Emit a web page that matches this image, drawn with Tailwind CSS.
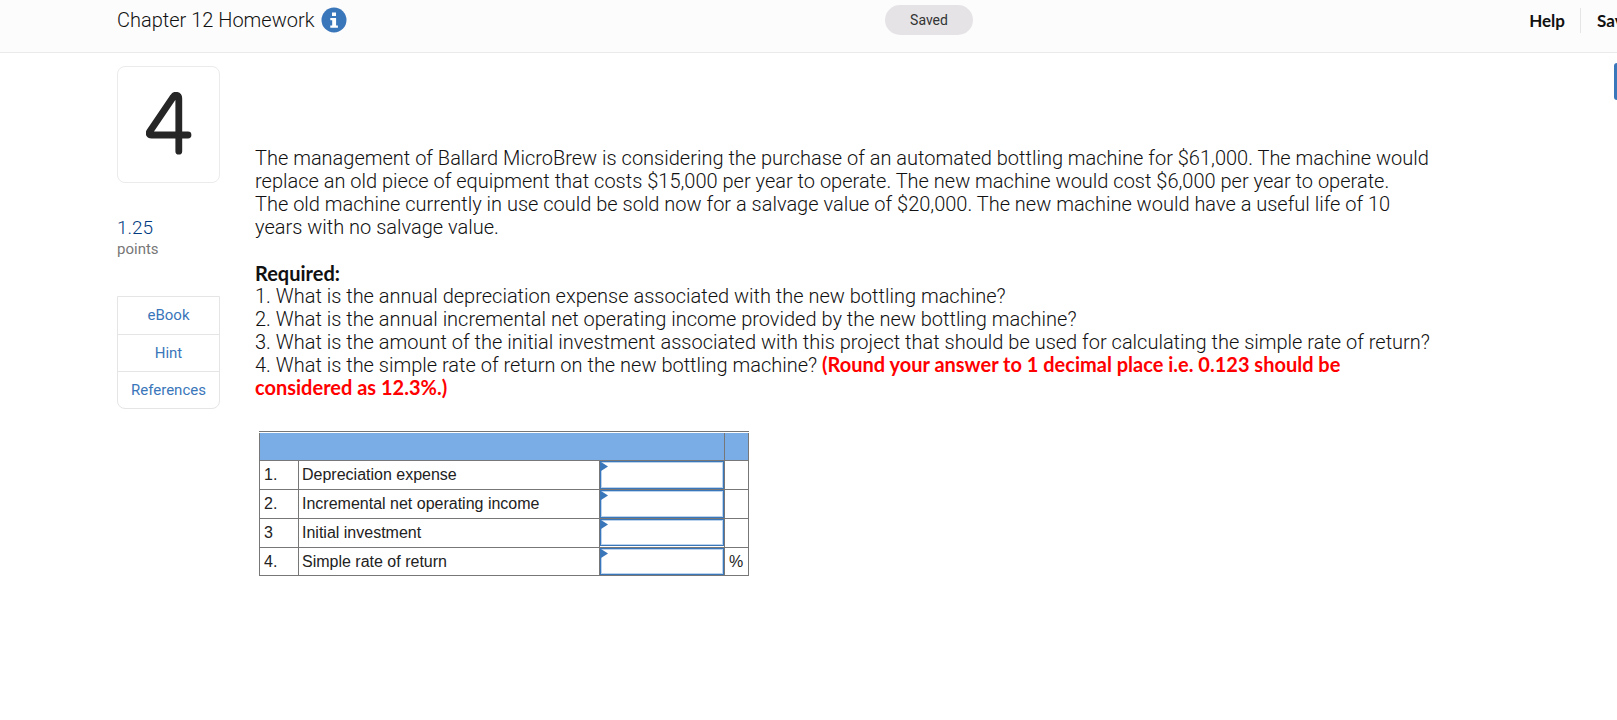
<!DOCTYPE html>
<html lang="en">
<head>
<meta charset="utf-8">
<title>Chapter 12 Homework</title>
<script src="https://cdn.jsdelivr.net/npm/@tailwindcss/browser@4"></script>
</head>
<body class="overflow-x-hidden bg-white font-['Roboto',sans-serif] font-light text-[#111]">
<header class="flex h-[53px] items-start overflow-hidden border-b border-[#eaeaea] bg-[#fcfcfc] pl-[117px]">
  <div class="flex w-[768px] items-center gap-[6px] pt-[7px]">
    <h1 class="text-[20px] leading-[26px]">Chapter 12 Homework</h1>
    <button type="button" aria-label="Assignment information">
      <svg class="size-[26px]" viewBox="0 0 26 26"><circle cx="13" cy="13" r="12.5" fill="#3a76ba"/><path d="M11 5.500h4v3.600h-4zM9.300 11h5.800v7.500h1.800v2.200H9.300v-2.200h1.900v-5.300H9.300z" fill="#fff"/></svg>
    </button>
  </div>
  <div class="mt-[5px] w-[88px] shrink-0 rounded-full bg-[#e5e3e6] text-center text-[14px] leading-[30px] font-normal text-[#333]">Saved</div>
  <nav class="ml-auto flex pt-[8px] font-['Lato',sans-serif] text-[17px] leading-[25px] font-bold">
    <a href="#" class="border-r border-[#e5e5e5] pr-[15px]">Help</a>
    <a href="#" class="w-[36px] overflow-hidden pl-[16px] whitespace-nowrap">Save &amp; Exit</a>
  </nav>
</header>
<div class="relative flex pl-[117px]">
  <aside class="w-[103px] shrink-0 pt-[13px]">
    <div class="flex h-[117px] items-center justify-center rounded-lg border border-[#ebebeb] pb-[3px]">
      <svg class="h-[63px] w-[46px]" viewBox="0 0 46 63" role="img" aria-label="Question 4"><path d="M32.800 59.200V6.500C32.800 2.800 29 2.200 27.200 5L3.800 39.500C2.500 41.500 3.200 43 5.500 43H42" fill="none" stroke="#262626" stroke-width="6.800" stroke-linecap="round" stroke-linejoin="round"/></svg>
    </div>
    <p class="mt-[34px] text-[19px] leading-[22px] text-[#003a80]">1.25</p>
    <p class="text-[15px] leading-[20px] font-normal text-[#777]">points</p>
    <div class="mt-[37px] flex flex-col divide-y divide-[#e5e5e5] rounded-b-lg border border-[#e5e5e5] text-[15px] leading-[36px] font-normal text-[#3a76ba]">
      <button type="button" class="pb-px">eBook</button>
      <button type="button">Hint</button>
      <button type="button">References</button>
    </div>
  </aside>
  <main class="min-w-0 flex-1 pt-[94px] pl-[35px]">
    <div class="text-[20px] leading-[23px]">
      <p>The management of Ballard MicroBrew is considering the purchase of an automated bottling machine for $61,000. The machine would<br>replace an old piece of equipment that costs $15,000 per year to operate. The new machine would cost $6,000 per year to operate.<br>The old machine currently in use could be sold now for a salvage value of $20,000. The new machine would have a useful life of 10<br>years with no salvage value.</p>
      <p class="mt-[23px] font-['Lato',sans-serif] font-bold">Required:</p>
      <p>1. What is the annual depreciation expense associated with the new bottling machine?</p>
      <p>2. What is the annual incremental net operating income provided by the new bottling machine?</p>
      <p>3. What is the amount of the initial investment associated with this project that should be used for calculating the simple rate of return?</p>
      <p>4. What is the simple rate of return on the new bottling machine? <strong class="font-['Lato',sans-serif] leading-5 font-bold text-[#f00]">(Round your answer to 1 decimal place i.e. 0.123 should be<br>considered as 12.3%.)</strong></p>
    </div>
    <div class="mt-[31px] ml-[4px] w-[490px] border-t border-[#777] pt-px font-['Liberation_Sans',Arial,sans-serif] text-[16px] leading-[20px] font-normal text-[#222]">
      <table class="w-full table-fixed border-collapse">
        <colgroup><col class="w-[39px]"><col class="w-[301px]"><col class="w-[125px]"><col class="w-[24px]"></colgroup>
        <thead>
          <tr class="h-[27px] bg-[#7aace6]"><th colspan="3" class="border border-t-0 border-[#777]"></th><th class="border border-t-0 border-[#777]"></th></tr>
        </thead>
        <tbody>
          <tr class="h-[29px]">
            <td class="border border-[#777] p-0 pt-px pl-[4px]">1.</td>
            <td class="border border-[#777] p-0 pt-px pl-[3px]"><label for="a1">Depreciation expense</label></td>
            <td class="border border-[#777] p-0"><div class="relative"><input id="a1" type="text" class="block h-[28px] w-full border border-[#3a76ba] px-3 shadow-[inset_0_0_0_1px_#bcd3ee] outline-none"><svg class="pointer-events-none absolute top-px left-px h-[9px] w-[7px]" viewBox="0 0 7 9"><path d="M0 0L7 4.500L0 9z" fill="#3a76ba"/></svg></div></td>
            <td class="border border-[#777]"></td>
          </tr>
          <tr class="h-[29px]">
            <td class="border border-[#777] p-0 pl-[4px]">2.</td>
            <td class="border border-[#777] p-0 pl-[3px]"><label for="a2">Incremental net operating income</label></td>
            <td class="border border-[#777] p-0"><div class="relative"><input id="a2" type="text" class="block h-[28px] w-full border border-[#3a76ba] px-3 shadow-[inset_0_0_0_1px_#bcd3ee] outline-none"><svg class="pointer-events-none absolute top-px left-px h-[9px] w-[7px]" viewBox="0 0 7 9"><path d="M0 0L7 4.500L0 9z" fill="#3a76ba"/></svg></div></td>
            <td class="border border-[#777]"></td>
          </tr>
          <tr class="h-[29px]">
            <td class="border border-[#777] p-0 pl-[4px]">3</td>
            <td class="border border-[#777] p-0 pl-[3px]"><label for="a3">Initial investment</label></td>
            <td class="border border-[#777] p-0 pb-px"><div class="relative"><input id="a3" type="text" class="block h-[27px] w-full border border-[#3a76ba] px-3 shadow-[inset_0_0_0_1px_#bcd3ee] outline-none"><svg class="pointer-events-none absolute top-px left-px h-[9px] w-[7px]" viewBox="0 0 7 9"><path d="M0 0L7 4.500L0 9z" fill="#3a76ba"/></svg></div></td>
            <td class="border border-[#777]"></td>
          </tr>
          <tr class="h-[28px]">
            <td class="border border-[#777] p-0 pt-px pl-[4px]">4.</td>
            <td class="border border-[#777] p-0 pt-px pl-[3px]"><label for="a4">Simple rate of return</label></td>
            <td class="border border-[#777] p-0"><div class="relative"><input id="a4" type="text" class="block h-[27px] w-full border border-[#3a76ba] px-3 shadow-[inset_0_0_0_1px_#bcd3ee] outline-none"><svg class="pointer-events-none absolute top-px left-px h-[9px] w-[7px]" viewBox="0 0 7 9"><path d="M0 0L7 4.500L0 9z" fill="#3a76ba"/></svg></div></td>
            <td class="border border-[#777] p-0 pt-px pl-[4px]">%</td>
          </tr>
        </tbody>
      </table>
    </div>
  </main>
  <button type="button" aria-label="Open side panel" class="absolute top-[10px] right-0 h-[37px] w-[3px] rounded-l-[3px] bg-[#3a76ba]"></button>
</div>
</body>
</html>
